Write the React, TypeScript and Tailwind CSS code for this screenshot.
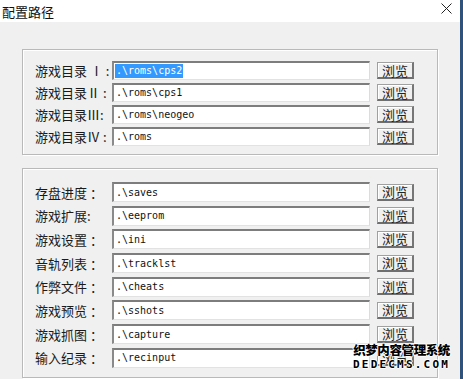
import React from "react";

const cjk = "font-['Noto_Sans_CJK_SC','Noto_Sans',sans-serif]";

const romRows = [
  { label: "游戏目录 Ⅰ :", value: ".\\roms\\cps2", selected: true },
  { label: "游戏目录Ⅱ :", value: ".\\roms\\cps1" },
  { label: "游戏目录Ⅲ:", value: ".\\roms\\neogeo" },
  { label: "游戏目录Ⅳ :", value: ".\\roms" },
];

const otherRows = [
  { label: "存盘进度 ：", value: ".\\saves" },
  { label: "游戏扩展:", value: ".\\eeprom" },
  { label: "游戏设置 ：", value: ".\\ini" },
  { label: "音轨列表 ：", value: ".\\tracklst" },
  { label: "作弊文件 ：", value: ".\\cheats" },
  { label: "游戏预览 ：", value: ".\\sshots" },
  { label: "游戏抓图 ：", value: ".\\capture" },
  { label: "输入纪录 ：", value: ".\\recinput" },
];

function PathRow({
  label,
  value,
  selected,
  tall,
}: {
  label: string;
  value: string;
  selected?: boolean;
  tall?: boolean;
}) {
  return (
    <div className={`flex items-center ${tall ? "h-[20px]" : "h-[19px]"}`}>
      <span
        className={`${cjk} w-[77px] shrink-0 whitespace-pre text-[13px] leading-none text-[#1a1a1a]`}
      >
        {label}
      </span>
      <div className="flex h-full w-[258px] items-center border-t-2 border-l-2 border-t-[#7d7d7d] border-l-[#8a8a8a] border-b border-r border-b-[#e2e2e2] border-r-[#dcdcdc] bg-white pl-[1px]">
        <span
          className={`font-['DejaVu_Sans_Mono',monospace] text-[10px] leading-[14px] whitespace-pre px-[1px] ${
            selected ? "bg-[#3399ff] text-white" : "text-[#111]"
          }`}
        >
          {value}
        </span>
      </div>
      <button
        className={`${cjk} ml-[7px] flex h-[17px] w-[37px] items-center justify-center border border-[#a0a0a0] border-b-2 border-r-2 border-b-[#6f6f6f] border-r-[#767676] bg-[#f0f0f0] text-[13px] leading-none text-[#222] shadow-[inset_1px_1px_0_#fff]`}
      >
        浏览
      </button>
    </div>
  );
}

export default function App() {
  return (
    <div className="relative flex h-[379px] w-[463px] overflow-hidden bg-[#f0f0f0]">
      <div className="flex w-[460px] flex-col">
        {/* Title bar */}
        <div className="flex h-[22px] items-center justify-between bg-white pl-[2px] pr-[8px]">
          <span className={`${cjk} text-[13px] leading-none text-[#111]`}>配置路径</span>
          <svg width="11" height="11" viewBox="0 0 11 11" className="mb-[6px]">
            <path d="M0.5 0.5 L10.5 10.5 M10.5 0.5 L0.5 10.5" stroke="#222" strokeWidth="1" />
          </svg>
        </div>

        <div className="flex flex-col gap-[13px] pl-[22px] pt-[27px]">
          {/* ROM directories */}
          <div className="flex h-[106px] w-[416px] flex-col gap-[3px] border border-[#b9b9b9] pl-[12px] pt-[11px] shadow-[inset_1px_1px_0_#fff,1px_1px_0_#fff]">
            {romRows.map((r) => (
              <PathRow key={r.label} {...r} />
            ))}
          </div>

          {/* Other directories */}
          <div className="flex h-[210px] w-[416px] flex-col gap-[3.7px] border border-[#b9b9b9] pl-[12px] pt-[13px] shadow-[inset_1px_1px_0_#fff,1px_1px_0_#fff]">
            {otherRows.map((r) => (
              <PathRow key={r.label} {...r} tall />
            ))}
          </div>
        </div>
      </div>
      <div className="w-[3px] bg-[#2f527c]" />

      {/* watermark */}
      <div className="absolute left-[353px] top-[344px] flex flex-col items-center leading-none">
        <span
          className={`${cjk} text-[12.5px] font-black tracking-[-0.4px] text-black [text-shadow:1px_0_#fff,-1px_0_#fff,0_1px_#fff,0_-1px_#fff]`}
        >
          织梦内容管理系统
        </span>
        <span className="mt-[2px] font-['DejaVu_Sans_Mono',monospace] text-[11px] font-bold tracking-[2.2px] text-black [text-shadow:1px_0_#fff,-1px_0_#fff,0_1px_#fff,0_-1px_#fff]">
          DEDECMS.COM
        </span>
      </div>
    </div>
  );
}
